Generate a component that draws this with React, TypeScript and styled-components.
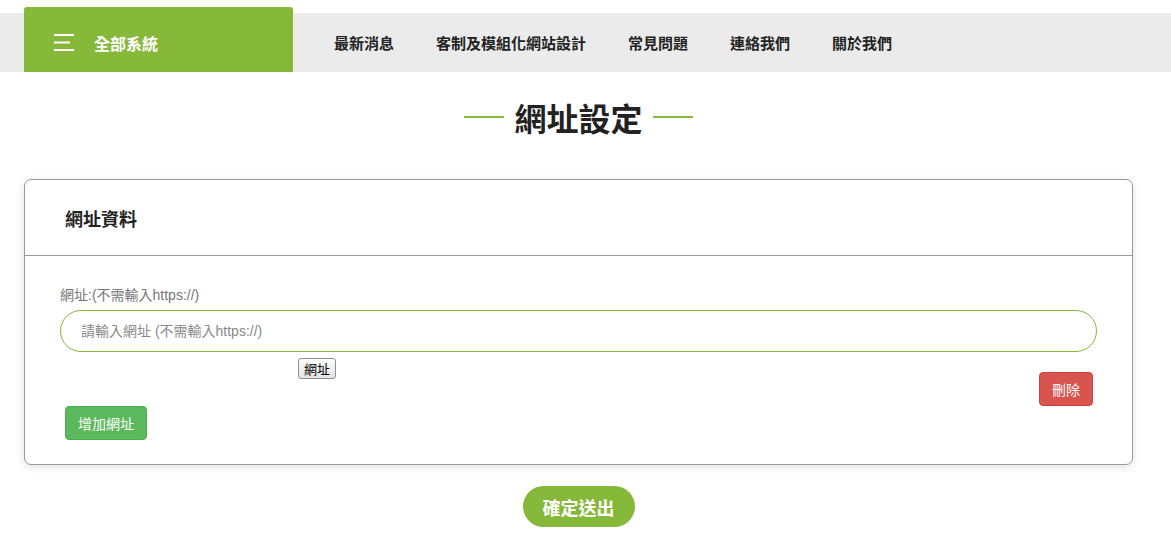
import React from 'react';
import styled, { createGlobalStyle } from 'styled-components';

const GlobalStyle = createGlobalStyle`
  body {
    margin: 0;
    background: #fff;
    font-family: "Liberation Sans", "Noto Sans CJK TC", sans-serif;
    color: #222;
  }
`;

const green = '#86b83a';

const TopBar = styled.header`
  margin-top: 13px;
  height: 59px;
  background: #ebebeb;
  display: flex;
  padding-left: 24px;
`;

const MenuBox = styled.div`
  width: 269px;
  height: 65px;
  margin-top: -6px;
  padding: 6px 0 0 30px;
  box-sizing: border-box;
  background: ${green};
  border-radius: 3px 3px 0 0;
  display: flex;
  align-items: center;
  gap: 20px;
  color: #fff;
  font-family: "Noto Sans CJK TC", sans-serif;
  font-weight: bold;
  font-size: 16px;
  cursor: pointer;
`;

const NavLinks = styled.nav`
  display: flex;
  align-items: center;
  margin-left: 20px;
`;

const NavLink = styled.a`
  padding: 0 21px;
  font-family: "Noto Sans CJK TC", sans-serif;
  font-size: 15px;
  font-weight: bold;
  color: #222;
  text-decoration: none;
  line-height: 20px;
`;

const Main = styled.main`
  padding: 0 38px 30px 24px;
  display: flex;
  flex-direction: column;
  align-items: center;
`;

const PageTitle = styled.h1`
  margin: 25px 0 42px;
  display: flex;
  align-items: center;
  gap: 10px;
  font-family: "Noto Sans CJK TC", sans-serif;
  font-size: 32px;
  line-height: 40px;
  font-weight: bold;
  color: #222;

  &::before,
  &::after {
    content: '';
    width: 40px;
    height: 2px;
    background: ${green};
  }
`;

const Card = styled.section`
  align-self: stretch;
  border: 1px solid #999;
  border-radius: 7px;
  box-shadow: 0 2px 8px rgba(0, 0, 0, 0.12);
  background: #fff;
`;

const CardHeader = styled.div`
  height: 75px;
  display: flex;
  align-items: center;
  padding-left: 40px;
  border-bottom: 1px solid #999;
  font-family: "Noto Sans CJK TC", sans-serif;
  font-size: 18px;
  font-weight: bold;
  color: #222;
`;

const CardBody = styled.div`
  padding: 29px 35px 24px;
`;

const Label = styled.label`
  display: block;
  font-size: 14px;
  line-height: 20px;
  color: #777;
`;

const UrlInput = styled.input`
  display: block;
  width: 100%;
  box-sizing: border-box;
  height: 42px;
  margin-top: 5px;
  padding: 0 20px;
  border: 1px solid ${green};
  border-radius: 21px;
  font-family: inherit;
  font-size: 14px;
  color: #555;
  outline: none;

  &::placeholder {
    color: #888;
  }
`;

const ActionRow = styled.div`
  display: flex;
  justify-content: space-between;
  align-items: flex-start;
  margin-top: 6px;
  padding: 0 4px 0 238px;
`;

const PlainButton = styled.button`
  padding: 1px 5px;
  height: 21px;
  font-family: "Noto Sans CJK TC", sans-serif;
  font-size: 13px;
  line-height: 17px;
  color: #000;
  background: linear-gradient(#fdfdfd, #e4e4e4);
  border: 1px solid #8e8f8f;
  border-radius: 3px;
`;

const Btn = styled.button<{ $tone: 'success' | 'danger' }>`
  padding: 6px 12px;
  font-family: "Noto Sans CJK TC", sans-serif;
  font-size: 14px;
  line-height: 20px;
  color: #fff;
  border-radius: 4px;
  border: 1px solid ${p => (p.$tone === 'danger' ? '#d43f3a' : '#4cae4c')};
  background: ${p => (p.$tone === 'danger' ? '#d9534f' : '#5cb85c')};
  cursor: pointer;
`;

const DeleteBtn = styled(Btn)`
  margin-top: 14px;
`;

const AddBtn = styled(Btn)`
  margin-left: 5px;
`;

const SubmitBtn = styled.button`
  margin-top: 21px;
  height: 41px;
  padding: 0 20px;
  border: none;
  border-radius: 21px;
  background: ${green};
  color: #fff;
  font-family: "Noto Sans CJK TC", sans-serif;
  font-size: 18px;
  font-weight: bold;
  cursor: pointer;
`;

const MenuIcon = () => (
  <svg width="20" height="17" viewBox="0 0 20 17" fill="#fff">
    <rect x="0" y="0" width="20" height="2" />
    <rect x="0" y="7.5" width="16" height="2" />
    <rect x="0" y="15" width="20" height="2" />
  </svg>
);

const links = ['最新消息', '客制及模組化網站設計', '常見問題', '連絡我們', '關於我們'];

export default function App() {
  return (
    <>
      <GlobalStyle />
      <TopBar>
        <MenuBox>
          <MenuIcon />
          <span>全部系統</span>
        </MenuBox>
        <NavLinks>
          {links.map(text => (
            <NavLink key={text} href="#">{text}</NavLink>
          ))}
        </NavLinks>
      </TopBar>
      <Main>
        <PageTitle>網址設定</PageTitle>
        <Card>
          <CardHeader>網址資料</CardHeader>
          <CardBody>
            <Label>網址:(不需輸入https://)</Label>
            <UrlInput placeholder="請輸入網址 (不需輸入https://)" />
            <ActionRow>
              <PlainButton>網址</PlainButton>
              <DeleteBtn $tone="danger">刪除</DeleteBtn>
            </ActionRow>
            <AddBtn $tone="success">增加網址</AddBtn>
          </CardBody>
        </Card>
        <SubmitBtn>確定送出</SubmitBtn>
      </Main>
    </>
  );
}
